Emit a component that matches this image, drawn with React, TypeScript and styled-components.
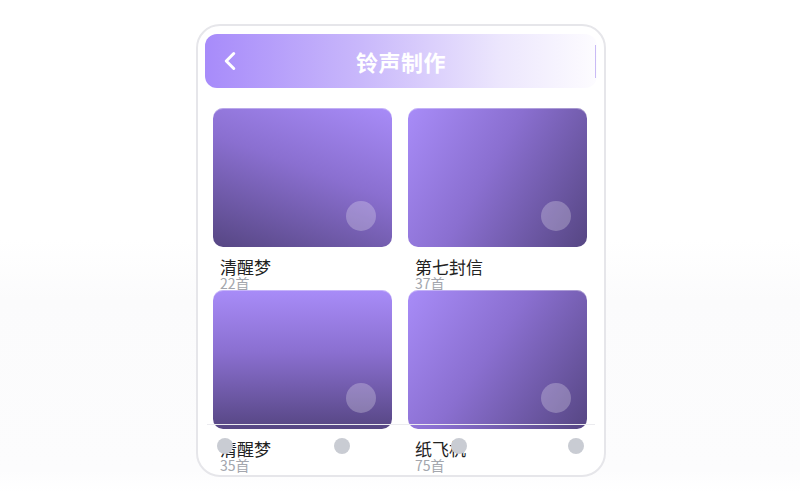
import React from "react";
import styled, { createGlobalStyle } from "styled-components";
import { ChevronLeft } from "lucide-react";

const Global = createGlobalStyle`
  html, body { margin: 0; padding: 0; }
  body {
    min-height: 492px;
    background: linear-gradient(180deg, #ffffff 0px, #ffffff 240px, #fbfbfc 300px, #fcfcfd 470px, #ffffff 492px);
    font-family: "Noto Sans CJK SC", "Noto Sans", sans-serif;
  }
`;

const Page = styled.div`
  display: flex;
  justify-content: center;
  padding-top: 24px;
  padding-left: 2px;
`;

const Phone = styled.div`
  position: relative;
  box-sizing: border-box;
  width: 410px;
  height: 453px;
  border: 2px solid #e6e6ea;
  border-radius: 24px;
  background: #ffffff;
  padding: 8px 7px 0 7px;
  overflow: hidden;
`;

const Header = styled.div`
  position: relative;
  height: 54px;
  border-radius: 12px;
  background: linear-gradient(90deg, #a78bfa 0%, #c9b8fb 40%, #ece6fd 75%, #fdfcff 100%);
  display: flex;
  align-items: center;
  padding-left: 10px;
  &::after {
    content: "";
    position: absolute;
    right: 1px;
    top: 11px;
    width: 1px;
    height: 33px;
    background: #c9bbf5;
  }
`;

const Back = styled.div`
  display: flex;
  color: #ffffff;
  width: 30px;
`;

const Title = styled.div`
  position: absolute;
  left: 0;
  right: 0;
  text-align: center;
  color: #ffffff;
  font-size: 22px;
  font-weight: 700;
  letter-spacing: 0.5px;
  pointer-events: none;
`;

const Grid = styled.div`
  display: grid;
  grid-template-columns: 179px 179px;
  column-gap: 16px;
  padding: 20px 8px 0 8px;
`;

const Card = styled.div`
  display: flex;
  flex-direction: column;
  height: 182px;
`;

const Cover = styled.div<{ $angle: number }>`
  position: relative;
  height: 139px;
  border-radius: 10px;
  background: linear-gradient(${(p) => p.$angle}deg, #a88cf8 0%, #8a6fd0 45%, #564683 100%);
  box-shadow: inset 0 1px 0 rgba(255, 255, 255, 0.35);
`;

const Play = styled.div`
  position: absolute;
  right: 16px;
  bottom: 16px;
  width: 30px;
  height: 30px;
  border-radius: 50%;
  background: rgba(255, 255, 255, 0.25);
`;

const Name = styled.div`
  margin-top: 10px;
  padding-left: 7px;
  font-size: 17px;
  line-height: 19px;
  color: #222222;
`;

const Count = styled.div`
  padding-left: 7px;
  font-size: 14px;
  line-height: 14px;
  color: #a3a6ad;
`;

const Nav = styled.div`
  position: absolute;
  left: 9px;
  right: 9px;
  bottom: 0;
  height: 51px;
  border-top: 1px solid #ebebef;
  display: flex;
  justify-content: space-between;
  align-items: flex-start;
  padding: 13px 11px 0 10px;
  box-sizing: border-box;
`;

const Dot = styled.div`
  width: 16px;
  height: 16px;
  border-radius: 50%;
  background: #c9ccd3;
`;

const items = [
  { name: "清醒梦", count: "22首", angle: 200 },
  { name: "第七封信", count: "37首", angle: 120 },
  { name: "清醒梦", count: "35首", angle: 180 },
  { name: "纸飞机", count: "75首", angle: 125 },
];

export default function App() {
  return (
    <>
      <Global />
      <Page>
        <Phone>
          <Header>
            <Back>
              <ChevronLeft size={30} strokeWidth={2.4} />
            </Back>
            <Title>铃声制作</Title>
          </Header>
          <Grid>
            {items.map((it, i) => (
              <Card key={i}>
                <Cover $angle={it.angle}>
                  <Play />
                </Cover>
                <Name>{it.name}</Name>
                <Count>{it.count}</Count>
              </Card>
            ))}
          </Grid>
          <Nav>
            <Dot />
            <Dot />
            <Dot />
            <Dot />
          </Nav>
        </Phone>
      </Page>
    </>
  );
}
